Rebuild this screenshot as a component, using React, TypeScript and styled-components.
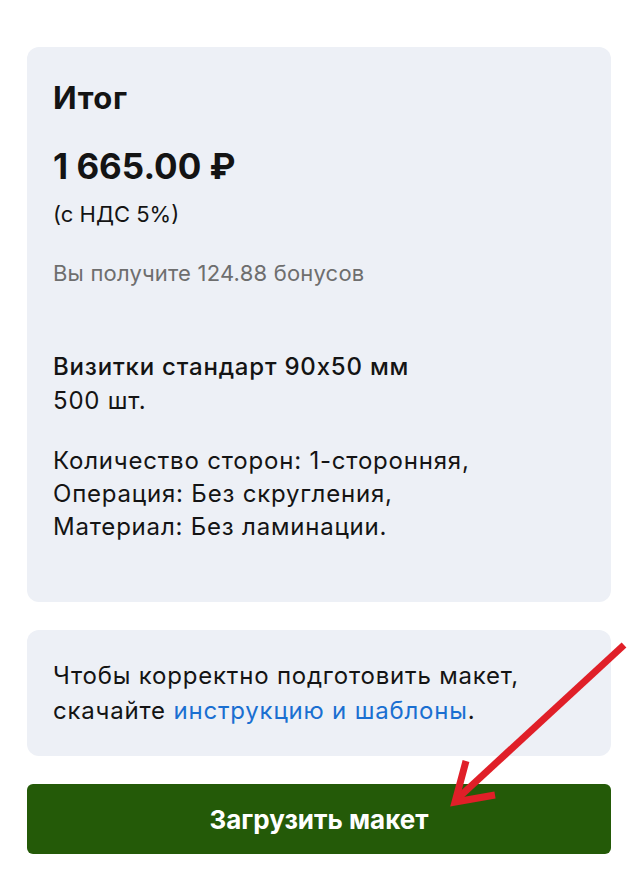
import styled, { createGlobalStyle } from "styled-components";

const GlobalStyle = createGlobalStyle`
  html, body {
    margin: 0;
    padding: 0;
    background: #ffffff;
  }
  body {
    font-family: Inter, "Noto Sans", "Liberation Sans", sans-serif;
    color: #141414;
  }
`;

const Page = styled.div`
  position: relative;
  width: 638px;
  height: 874px;
  box-sizing: border-box;
  padding: 47px 27px 0 27px;
  display: flex;
  flex-direction: column;
  gap: 28px;
  overflow: hidden;
`;

const Card = styled.div<{ $pad: string }>`
  background: #edf0f6;
  border-radius: 12px;
  padding: ${(p) => p.$pad};
`;

const Title = styled.h2`
  margin: 0;
  font-size: 31px;
  font-weight: 700;
  line-height: 38px;
  letter-spacing: 0.6px;
`;

const Price = styled.div`
  margin-top: 28px;
  font-size: 35px;
  font-weight: 700;
  line-height: 42px;
`;

const Vat = styled.div`
  margin-top: 13px;
  font-size: 22px;
  line-height: 28px;
`;

const Bonus = styled.div`
  margin-top: 31px;
  font-size: 22px;
  line-height: 28px;
  letter-spacing: 0.2px;
  color: #6e6e6e;
`;

const Product = styled.div`
  margin-top: 63px;
  font-size: 24px;
  line-height: 34px;
  letter-spacing: 0.8px;
`;

const ProductName = styled.div`
  font-weight: 500;
`;

const Details = styled.div`
  margin-top: 26px;
  font-size: 24px;
  line-height: 33px;
  letter-spacing: 0.8px;
`;

const Note = styled.p`
  margin: 0;
  font-size: 24px;
  line-height: 35px;
  letter-spacing: 0.8px;
`;

const Link = styled.a`
  color: #1a6fd1;
  text-decoration: none;
`;

const UploadButton = styled.button`
  height: 70px;
  flex-shrink: 0;
  border: none;
  border-radius: 6px;
  background: #245a08;
  color: #ffffff;
  font-family: inherit;
  font-size: 26px;
  font-weight: 700;
  cursor: pointer;
`;

const Arrow = styled.svg`
  position: absolute;
  left: 0;
  top: 0;
  pointer-events: none;
`;

export default function App() {
  return (
    <>
      <GlobalStyle />
      <Page>
        <Card $pad="32px 26px 59px">
          <Title>Итог</Title>
          <Price>1 665.00 ₽</Price>
          <Vat>(с НДС 5%)</Vat>
          <Bonus>Вы получите 124.88 бонусов</Bonus>
          <Product>
            <ProductName>Визитки стандарт 90x50 мм</ProductName>
            <div>500 шт.</div>
          </Product>
          <Details>
            <div>Количество сторон: 1-сторонняя,</div>
            <div>Операция: Без скругления,</div>
            <div>Материал: Без ламинации.</div>
          </Details>
        </Card>
        <Card $pad="28px 26px 28px">
          <Note>
            Чтобы корректно подготовить макет,
            <br />
            скачайте <Link href="#">инструкцию и шаблоны</Link>.
          </Note>
        </Card>
        <UploadButton>Загрузить макет</UploadButton>
        <Arrow width="638" height="874" viewBox="0 0 638 874">
          <g stroke="#e01f28" strokeWidth="7" fill="none">
            <line x1="624" y1="645" x2="457" y2="799" />
            <polyline points="466,761 455,802 495,795" strokeLinejoin="miter" />
          </g>
        </Arrow>
      </Page>
    </>
  );
}
